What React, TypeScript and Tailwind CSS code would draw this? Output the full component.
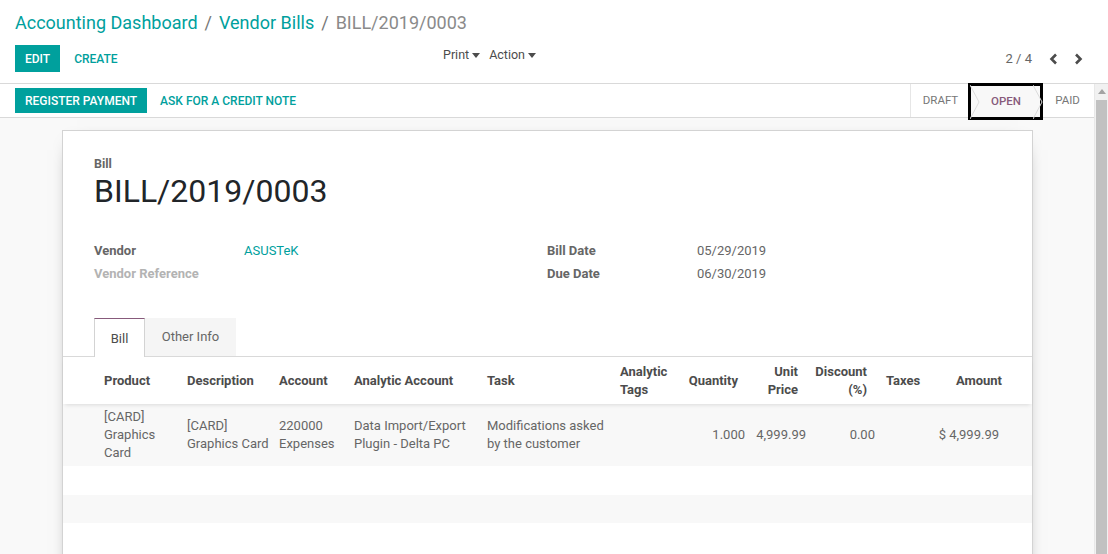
import React from "react";

const teal = "text-[#00A09D]";

function Caret() {
    return (
        <svg width="8" height="5" viewBox="0 0 8 5" className="ml-[3px] inline-block">
            <path d="M0 0h8L4 5z" fill="#4c4c4c" />
        </svg>
    );
}

function Chevron({ dir }: { dir: "left" | "right" }) {
    return (
        <svg width="9" height="12" viewBox="0 0 9 12">
            <path
                d={dir === "left" ? "M7 1.5 2.5 6 7 10.5" : "M2 1.5 6.5 6 2 10.5"}
                fill="none"
                stroke="#4c4c4c"
                strokeWidth="2.6"
            />
        </svg>
    );
}

function Arrow({ side }: { side: "l" | "r" }) {
    return (
        <svg
            width="10"
            height="34"
            viewBox="0 0 10 34"
            className={`absolute -top-[1px] ${side === "l" ? "-left-[1px]" : "-right-[3px]"}`}
        >
            <path d="M0 0 9 17 0 34" fill="none" stroke="#dcdcdc" strokeWidth="1" />
        </svg>
    );
}

type Col = { w: string; align?: "r" };
const cols: Col[] = [
    { w: "w-[83px]" },
    { w: "w-[92px]" },
    { w: "w-[75px]" },
    { w: "w-[133px]" },
    { w: "w-[133px]" },
    { w: "w-[60px]" },
    { w: "w-[65px]", align: "r" },
    { w: "w-[61px]", align: "r" },
    { w: "w-[69px]", align: "r" },
    { w: "w-[60px] pl-[11px]" },
    { w: "w-[67px]", align: "r" },
];

const headers: React.ReactNode[] = [
    "Product",
    "Description",
    "Account",
    "Analytic Account",
    "Task",
    <>Analytic<br />Tags</>,
    "Quantity",
    <>Unit<br />Price</>,
    <>Discount<br />(%)</>,
    "Taxes",
    "Amount",
];

const values: React.ReactNode[] = [
    <>[CARD]<br />Graphics<br />Card</>,
    <>[CARD]<br />Graphics Card</>,
    <>220000<br />Expenses</>,
    <>Data Import/Export<br />Plugin - Delta PC</>,
    <>Modifications asked<br />by the customer</>,
    "",
    "1.000",
    "4,999.99",
    "0.00",
    "",
    "$ 4,999.99",
];

const headerPad = ["", "", "", "", "", "", "pr-[7px]", "pr-[8px]", "pr-[8px]", "", "pr-0"];
const valuePad = ["", "", "", "", "", "", "pr-0", "pr-0", "pr-0", "", "pr-[3px]"];

export default function App() {
    return (
        <div className="w-[1108px] h-[554px] overflow-hidden bg-white font-['Roboto',sans-serif] text-[13px] text-[#666] flex flex-col">
            {/* Control panel */}
            <div className="h-[84px] shrink-0 border-b border-[#d9d9d9] px-[15px] flex flex-col">
                <div className="h-[45px] flex items-center text-[18px] pb-[1px]">
                    <span className={teal}>Accounting Dashboard</span>
                    <span className="text-[#777] mx-[7px]">/</span>
                    <span className={teal}>Vendor Bills</span>
                    <span className="text-[#777] mx-[7px]">/</span>
                    <span className="text-[#8a8a8a]">BILL/2019/0003</span>
                </div>
                <div className="flex items-start">
                    <div className="flex items-center w-[428px]">
                        <button className="h-[27px] px-[10px] bg-[#00A09D] text-white text-[12px] font-medium uppercase">
                            Edit
                        </button>
                        <button className={`h-[27px] px-[14px] text-[12px] font-medium uppercase ${teal}`}>
                            Create
                        </button>
                    </div>
                    <div className="flex items-center h-[20px] text-[12.5px] text-[#4c4c4c] gap-[9px]">
                        <span className="flex items-center">Print<Caret /></span>
                        <span className="flex items-center">Action<Caret /></span>
                    </div>
                    <div className="ml-auto flex items-center h-[27px] text-[#666] text-[13px]">
                        <span className="mr-[17px]">2 / 4</span>
                        <span className="mr-[16px]"><Chevron dir="left" /></span>
                        <span className="mr-[10px]"><Chevron dir="right" /></span>
                    </div>
                </div>
            </div>

            <div className="flex flex-1 min-h-0">
                <div className="flex-1 flex flex-col min-w-0">
                    {/* Status bar */}
                    <div className="h-[34px] shrink-0 border-b border-[#d9d9d9] flex items-center pl-[15px] bg-white">
                        <button className="h-[25px] px-[10px] bg-[#00A09D] text-white text-[12px] font-medium uppercase">
                            Register Payment
                        </button>
                        <button className={`h-[25px] px-[13px] text-[12px] font-medium uppercase ${teal}`}>
                            Ask for a credit note
                        </button>
                        <div className="ml-auto flex h-full text-[11.5px] uppercase">
                            <div className="w-[58px] h-full border-l border-[#e6e6e6] flex items-center justify-center text-[#777] pt-[1px] pl-[2px]">
                                Draft
                            </div>
                            <div className="relative w-[75px] h-[37px] -mt-[1px] border-[3px] border-black bg-[#f8f8f8] flex items-center justify-center text-[#875A7B] font-medium pl-[1px]">
                                <Arrow side="l" />
                                Open
                                <Arrow side="r" />
                            </div>
                            <div className="w-[51px] h-full flex items-center justify-center text-[#777] pt-[1px] pr-[2px]">
                                Paid
                            </div>
                        </div>
                    </div>

                    {/* Sheet background */}
                    <div className="flex-1 bg-[#f9f9f9] pt-[12px] pl-[62px] pr-[61px] min-h-0">
                        <div className="h-[500px] bg-white border border-[#d3d3d3] shadow-[0_5px_20px_-15px_black]">
                            <div className="px-[31px] pt-[25px]">
                                <div className="text-[12.5px] font-bold text-[#666] leading-[16px]">Bill</div>
                                <div className="text-[32px] text-[#212529] leading-[36px] mt-[1px]">BILL/2019/0003</div>

                                <div className="flex mt-[30px] leading-[23px]">
                                    <div className="w-[453px] flex">
                                        <div className="w-[150px] font-bold">
                                            <div className="text-[#666]">Vendor</div>
                                            <div className="text-[#b3b3b3]">Vendor Reference</div>
                                        </div>
                                        <div className={teal}>ASUSTeK</div>
                                    </div>
                                    <div className="flex">
                                        <div className="w-[150px] font-bold text-[#666]">
                                            <div>Bill Date</div>
                                            <div>Due Date</div>
                                        </div>
                                        <div>
                                            <div>05/29/2019</div>
                                            <div>06/30/2019</div>
                                        </div>
                                    </div>
                                </div>

                                {/* Tabs */}
                                <div className="flex mt-[33px] h-[38px]">
                                    <div className="w-[51px] h-[39px] bg-white border border-b-0 border-[#d3d3d3] border-t-[#875A7B] flex items-center justify-center text-[#4c4c4c] z-10 pt-[2px]">
                                        Bill
                                    </div>
                                    <div className="w-[91px] h-[38px] bg-[#f5f5f5] flex items-center justify-center text-[#666]">
                                        Other Info
                                    </div>
                                </div>
                            </div>
                            <div className="border-t border-[#d9d9d9]" />

                            {/* Lines table */}
                            <div className="flex h-[47px] items-center font-bold text-[#4c4c4c] leading-[18px] pl-[41px] shadow-[0_3px_4px_-2px_rgba(0,0,0,0.12)] relative z-10">
                                {cols.map((c, i) => (
                                    <div
                                        key={i}
                                        className={`${c.w} shrink-0 whitespace-nowrap ${c.align === "r" ? "text-right" : ""} ${headerPad[i]}`}
                                    >
                                        {headers[i]}
                                    </div>
                                ))}
                            </div>
                            <div className="flex h-[62px] items-center bg-[#f8f8f8] leading-[18px] pl-[41px]">
                                {cols.map((c, i) => (
                                    <div
                                        key={i}
                                        className={`${c.w} shrink-0 whitespace-nowrap ${c.align === "r" ? "text-right" : ""} ${valuePad[i]}`}
                                    >
                                        {values[i]}
                                    </div>
                                ))}
                            </div>
                            <div className="h-[29px]" />
                            <div className="h-[28px] bg-[#f8f8f8]" />
                        </div>
                    </div>
                </div>

                {/* Scrollbar */}
                <div className="w-[14px] shrink-0 bg-[#f1f1f1] border-l border-[#e8e8e8] flex flex-col items-center">
                    <svg width="8" height="6" viewBox="0 0 8 6" className="mt-[5px]">
                        <path d="M0 5h8L4 0z" fill="#a3a3a3" />
                    </svg>
                    <div className="w-[11px] flex-1 mt-[5px] bg-[#c1c1c1]" />
                </div>
            </div>
        </div>
    );
}
